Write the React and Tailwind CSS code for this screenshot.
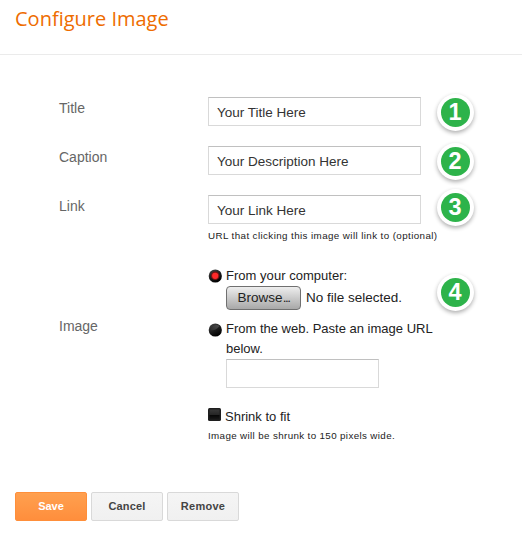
import React from "react";

function Badge({ n, className = "" }) {
  return (
    <div
      className={`flex size-[37px] shrink-0 items-center justify-center rounded-full bg-white shadow-[0_2px_4px_rgba(0,0,0,0.32)] ${className}`}
    >
      <span className="flex size-[29px] items-center justify-center rounded-full bg-[#2db34a] pt-px pr-px text-[23.5px] leading-none font-bold text-white">
        {n}
      </span>
    </div>
  );
}

function TextRow({ label, value, n, badgeClass }) {
  return (
    <div className="flex h-[29px]">
      <div className="w-[149px] pt-[1px] text-[14px] leading-5 text-[#666]">{label}</div>
      <div className="h-[29px] w-[213px] border border-[#d9d9d9] border-t-[#c0c0c0] pt-[5px] pl-2 text-[13.5px] leading-5 text-[#333]">
        {value}
      </div>
      <Badge n={n} className={badgeClass} />
    </div>
  );
}

function Radio({ checked, className = "" }) {
  return (
    <svg className={`mr-[4px] size-[14px] shrink-0 ${className}`} viewBox="0 0 14 14">
      <defs>
        <linearGradient id="orb" x1="0" y1="0" x2="0.5" y2="1">
          <stop offset="0" stopColor="#4a4a4a" />
          <stop offset="0.5" stopColor="#222" />
          <stop offset="1" stopColor="#000" />
        </linearGradient>
        <linearGradient id="gloss" x1="0" y1="0" x2="1" y2="0">
          <stop offset="0" stopColor="#333" />
          <stop offset="1" stopColor="#777" />
        </linearGradient>
      </defs>
      <circle cx="7.3" cy="7" r="6.6" fill="url(#orb)" />
      {checked ? (
        <>
          <circle cx="7.2" cy="6.8" r="4.3" fill="#7a1414" />
          <circle cx="7.2" cy="6.8" r="3.1" fill="#ff2a2a" />
        </>
      ) : (
        <path d="M2.5 7C5 8 9 6.5 11.5 3C9 1 4 1.5 2.5 7Z" fill="url(#gloss)" opacity="0.5" />
      )}
    </svg>
  );
}

function Button({ children, className }) {
  return (
    <button className={`h-[29px] w-[72px] rounded-[2px] border text-[11px] font-bold ${className}`}>
      {children}
    </button>
  );
}

export default function App() {
  return (
    <div className="h-[545px] w-[522px] overflow-hidden bg-white font-['Liberation_Sans',Arial,sans-serif] text-[#222]">
      <header className="h-[55px] border-b border-[#ebebeb] pt-[5px] pl-[15px]">
        <h1 className="font-['Open_Sans',sans-serif] text-[20px] leading-[27px] text-[#ee6c00]">
          Configure Image
        </h1>
      </header>

      <main className="pt-[42px] pl-[59px]">
        <div className="flex flex-col gap-5">
          <TextRow label="Title" value="Your Title Here" n={1} badgeClass="-mt-[3px] ml-4" />
          <TextRow label="Caption" value="Your Description Here" n={2} badgeClass="-mt-[3px] ml-4" />
          <TextRow label="Link" value="Your Link Here" n={3} badgeClass="-mt-[6px] ml-4" />
        </div>

        <p className="mt-[5px] ml-[149px] text-[9.8px] leading-[14px] tracking-[0.4px] whitespace-nowrap">
          URL that clicking this image will link to (optional)
        </p>

        <div className="mt-[21px] flex">
          <div className="w-[149px] pt-[52px] text-[14px] leading-5 text-[#666]">Image</div>
          <div className="w-[229px] text-[13px] leading-5">
            <div className="flex">
              <Radio checked className="mt-[5px]" />
              <span className="pt-[2px] tracking-[0.03px]">From your computer:</span>
            </div>
            <div className="ml-[18px] flex items-center">
              <button className="h-6 w-[75px] rounded-[4px] border border-[#707070] bg-linear-to-b from-[#eee] to-[#a8a8a8] text-[13.5px] leading-5">
                Browse<span className="tracking-[-1.5px]">...</span>
              </button>
              <span className="ml-[5px] text-[13.5px] whitespace-nowrap">No file selected.</span>
            </div>
            <div className="mt-[9px] flex">
              <Radio className="mt-[4px]" />
              <span className="whitespace-nowrap">
                From the web. Paste an image URL
                <br />
                below.
              </span>
            </div>
            <div className="ml-[18px] h-[29px] w-[153px] border border-[#d9d9d9] border-t-[#c0c0c0]" />
          </div>
          <Badge n={4} className="mt-[10px]" />
        </div>

        <div className="mt-[19px] ml-[149px] flex items-start text-[13px] leading-5">
          <svg className="mt-[1px] mr-[4px] size-[13px]" viewBox="0 0 13 13">
            <defs>
              <linearGradient id="box" x1="0" y1="0" x2="0" y2="1">
                <stop offset="0" stopColor="#383838" />
                <stop offset="0.5" stopColor="#262626" />
                <stop offset="0.6" stopColor="#080808" />
                <stop offset="1" stopColor="#181818" />
              </linearGradient>
            </defs>
            <rect width="13" height="13" rx="1.5" fill="#1e1e1e" />
            <rect x="1.5" y="1.5" width="10" height="10" fill="url(#box)" />
          </svg>
          <span>Shrink to fit</span>
        </div>
        <p className="mt-[2px] ml-[149px] text-[9.8px] leading-[14px] tracking-[0.36px]">
          Image will be shrunk to 150 pixels wide.
        </p>
      </main>

      <footer className="mt-[49px] flex gap-1 pl-[15px]">
        <Button className="border-[#ff8f3a] bg-linear-to-b from-[#ffa04f] to-[#ff8e3c] text-white">Save</Button>
        <Button className="border-[#d9d9d9] bg-linear-to-b from-[#f5f5f5] to-[#f0f0f0] tracking-[0.15px] text-[#444]">Cancel</Button>
        <Button className="border-[#d9d9d9] bg-linear-to-b from-[#f5f5f5] to-[#f0f0f0] tracking-[0.25px] text-[#444]">Remove</Button>
      </footer>
    </div>
  );
}
